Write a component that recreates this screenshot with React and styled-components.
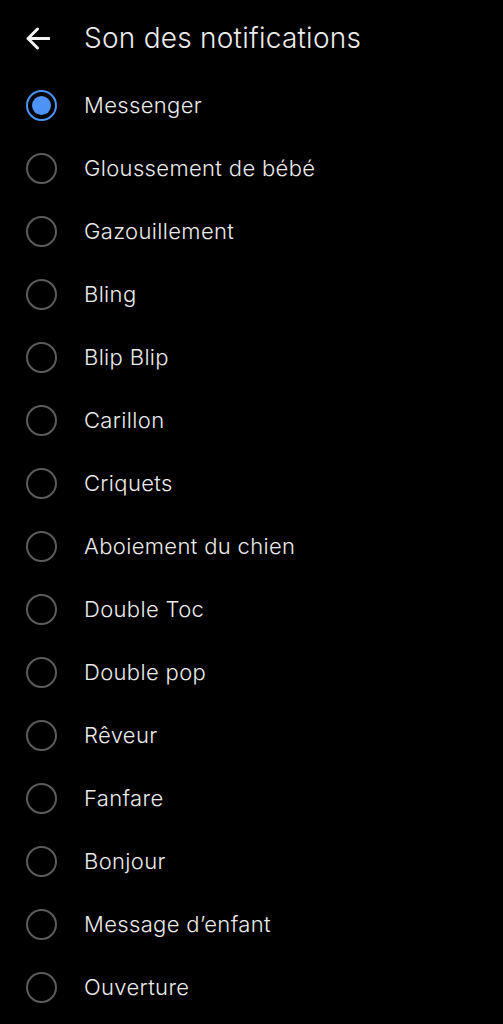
import styled, { createGlobalStyle } from 'styled-components'

const sounds = [
  'Messenger',
  'Gloussement de bébé',
  'Gazouillement',
  'Bling',
  'Blip Blip',
  'Carillon',
  'Criquets',
  'Aboiement du chien',
  'Double Toc',
  'Double pop',
  'Rêveur',
  'Fanfare',
  'Bonjour',
  'Message d’enfant',
  'Ouverture',
]

const GlobalStyle = createGlobalStyle`
  html, body {
    margin: 0;
    background: #000;
  }
  body {
    font-family: Inter, 'Noto Sans', sans-serif;
    color: #ebebeb;
  }
`

const Screen = styled.div`
  width: 503px;
  height: 1024px;
  overflow: hidden;
  background: #000;
`

const Header = styled.header`
  height: 74px;
  display: flex;
  align-items: center;
  padding-left: 24px;
  padding-top: 2px;
  box-sizing: border-box;
`

const BackButton = styled.button`
  width: 26px;
  height: 26px;
  padding: 0;
  margin-right: 34px;
  border: none;
  background: none;
  display: flex;
  align-items: center;
  justify-content: center;
  color: #f2f2f2;
  svg {
    display: block;
  }
`

const Title = styled.h1`
  margin: 0;
  font-size: 28px;
  font-weight: 300;
  letter-spacing: 0.25px;
`

const List = styled.ul`
  list-style: none;
  margin: 0;
  padding: 0;
`

const Row = styled.li`
  height: 63px;
  display: flex;
  align-items: center;
  padding-left: 26px;
`

const Radio = styled.span`
  width: 31px;
  height: 31px;
  box-sizing: border-box;
  border-radius: 50%;
  border: ${(p) => (p.checked ? '2.5px solid #4d92f5' : '2px solid #5c5c5c')};
  margin-right: 27px;
  display: flex;
  align-items: center;
  justify-content: center;
  flex-shrink: 0;
  &::after {
    content: '';
    width: 19px;
    height: 19px;
    border-radius: 50%;
    background: #4d92f5;
    display: ${(p) => (p.checked ? 'block' : 'none')};
  }
`

const Label = styled.span`
  font-size: 22px;
  font-weight: 300;
  letter-spacing: 0.35px;
  margin-top: -1px;
`

const App = () => {
  return (
    <Screen>
      <GlobalStyle />
      <Header>
        <BackButton aria-label='Retour'>
          <svg width='25' height='23' viewBox='0 0 25 23' fill='none'>
            <path
              d='M24 11.5H3M12.5 2L3 11.5L12.5 21'
              stroke='currentColor'
              strokeWidth='3'
              strokeLinecap='round'
              strokeLinejoin='round'
            />
          </svg>
        </BackButton>
        <Title>Son des notifications</Title>
      </Header>
      <List>
        {sounds.map((sound, index) => (
          <Row key={sound}>
            <Radio checked={index === 0} />
            <Label>{sound}</Label>
          </Row>
        ))}
      </List>
    </Screen>
  )
}

export default App
